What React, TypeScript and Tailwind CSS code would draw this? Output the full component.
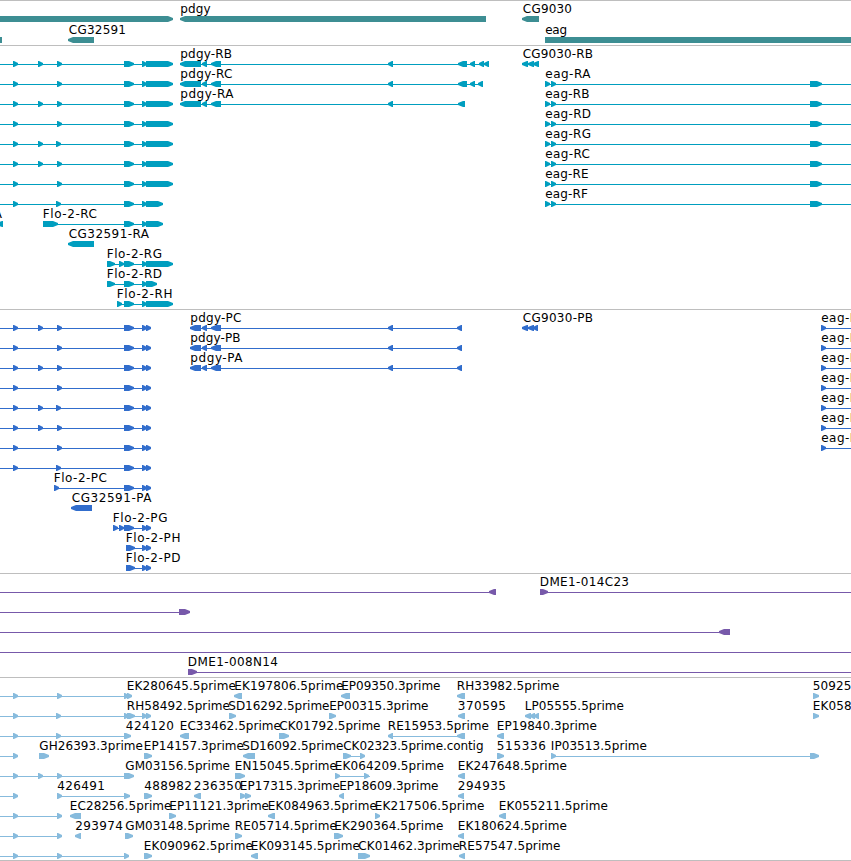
type Dir = '>' | '<';
type Feature = {
    // [x, width, text]
    labels?: [number, number, string][];
    // [x1, x2]
    lines?: [number, number][];
    // [direction, x1, x2]
    arrows?: [Dir, number, number][];
};

const merge = (...parts: Feature[]): Feature => ({
    labels: parts.flatMap((p) => p.labels ?? []),
    lines: parts.flatMap((p) => p.lines ?? []),
    arrows: parts.flatMap((p) => p.arrows ?? []),
});

const est = (x: number, width: number, text: string, dir: Dir, x1: number, x2: number): Feature => ({
    labels: [[x, width, text]],
    arrows: [[dir, x1, x2]],
});

// Flo-2 transcripts that start left of the visible region
const flo = (starts: number[], end: number): Feature => ({
    lines: [[0, end]],
    arrows: [
        ...starts.map((s): [Dir, number, number] => ['>', s, s + 5]),
        ['>', 124, 134],
        ['>', 142, 147],
        ['>', 146, end],
    ],
});

const floNamed = (x: number, width: number, text: string, exons: [number, number][], end: number): Feature => ({
    labels: [[x, width, text]],
    lines: [[exons[0][0], end]],
    arrows: [
        ...exons.map(([a, b]): [Dir, number, number] => ['>', a, b]),
        ['>', 142, 147],
        ['>', 146, end],
    ],
});

const pdgy = (x: number, width: number, text: string, start: number, exons: [number, number][]): Feature => ({
    labels: [[x, width, text]],
    lines: [[start, exons[exons.length - 1][1]]],
    arrows: [
        ['<', start, 201],
        ['<', 202, 207],
        ['<', 211, 221],
        ['<', 388, 393],
        ...exons.map(([a, b]): [Dir, number, number] => ['<', a, b]),
    ],
});

const cg9030 = (text: string, end: number): Feature => ({
    labels: [[522, 71, text]],
    lines: [[523, end]],
    arrows: [['<', 522, 528], ['<', 528, 534], ['<', 533, end]],
});

const eagR = (text: string, width: number): Feature => ({
    labels: [[544.5, width, text]],
    lines: [[545, 851]],
    arrows: [['>', 545, 550], ['>', 551, 556], ['>', 810, 822]],
});

// Only the first letters fit before the right edge of the region
const eagP: Feature = {
    labels: [[820.5, 36.5, 'eag-P']],
    lines: [[821, 851]],
    arrows: [['>', 821, 826]],
};

const genes: Feature[] = [
    {
        labels: [[179.5, 31, 'pdgy'], [522, 50, 'CG9030']],
        arrows: [['>', -10, 173], ['<', 180, 486], ['<', 522, 539]],
    },
    {
        labels: [[68, 58, 'CG32591'], [544.5, 22.5, 'eag']],
        arrows: [['<', -20, 2], ['<', 68, 94], ['>', 545, 870]],
    },
];

const transcripts: Feature[] = [
    merge(flo([13, 38, 57], 173), pdgy(179.5, 52.5, 'pdgy-RB', 180, [[458, 467], [470, 475], [479, 484], [484, 489]]), cg9030('CG9030-RB', 539)),
    merge(flo([13, 57], 173), pdgy(179.5, 53, 'pdgy-RC', 180, [[458, 467], [470, 475], [478, 483]]), eagR('eag-RA', 46)),
    merge(flo([13, 38, 57], 173), pdgy(179.5, 54, 'pdgy-RA', 180, [[458, 465]]), eagR('eag-RB', 45)),
    merge(flo([13, 57], 173), eagR('eag-RD', 46.5)),
    merge(flo([13, 38, 56], 173), eagR('eag-RG', 46.5)),
    merge(flo([13, 38, 57], 173), eagR('eag-RC', 45.5)),
    merge(flo([13, 57], 173), eagR('eag-RE', 44)),
    merge(flo([13, 56], 163), eagR('eag-RF', 43.5)),
    merge(
        { labels: [[-50, 52, 'Flo-2-RA']], arrows: [['<', -3, 3]] },
        floNamed(42, 55, 'Flo-2-RC', [[43, 58], [124, 134]], 163),
    ),
    est(68, 81, 'CG32591-RA', '<', 68, 94),
    floNamed(106, 56, 'Flo-2-RG', [[107, 115], [119, 124], [124, 134]], 173),
    floNamed(106, 56, 'Flo-2-RD', [[107, 115], [124, 134]], 157),
    floNamed(116, 56.5, 'Flo-2-RH', [[117, 122], [124, 134]], 173),
];

const proteins: Feature[] = [
    merge(flo([13, 38, 57], 151), pdgy(189.5, 52, 'pdgy-PC', 190, [[457, 462]]), cg9030('CG9030-PB', 538), eagP),
    merge(flo([13, 57], 151), pdgy(189.5, 51, 'pdgy-PB', 190, [[457, 462]]), eagP),
    merge(flo([13, 38, 57], 151), pdgy(189.5, 53, 'pdgy-PA', 190, [[457, 462]]), eagP),
    merge(flo([13, 57], 151), eagP),
    merge(flo([13, 38, 56], 151), eagP),
    merge(flo([13, 38, 57], 151), eagP),
    merge(flo([13, 57], 151), eagP),
    flo([13, 56], 151),
    floNamed(53, 54, 'Flo-2-PC', [[54, 59], [124, 134]], 151),
    est(71, 80.5, 'CG32591-PA', '<', 71, 92),
    floNamed(112, 55.5, 'Flo-2-PG', [[113, 118], [119, 124], [124, 134]], 151),
    floNamed(125, 55.5, 'Flo-2-PH', [[126, 135]], 151),
    floNamed(125, 55.5, 'Flo-2-PD', [[126, 135]], 151),
];

const clones: Feature[] = [
    { labels: [[539, 90, 'DME1-014C23']], lines: [[0, 496], [540, 851]], arrows: [['<', 489, 496], ['>', 540, 548]] },
    { lines: [[0, 190]], arrows: [['>', 179, 190]] },
    { lines: [[0, 730]], arrows: [['<', 719, 730]] },
    { lines: [[0, 851]] },
    { labels: [[187, 91, 'DME1-008N14']], lines: [[188, 851]], arrows: [['>', 188, 197]] },
];

const ests: Feature[] = [
    merge(
        { lines: [[0, 131]], arrows: [['>', 13, 18], ['>', 57, 62], ['>', 124, 129], ['>', 127, 132]] },
        { labels: [[126, 110, 'EK280645.5prime']] },
        est(233.5, 110, 'EK197806.5prime', '<', 234, 242),
        est(340.5, 100, 'EP09350.3prime', '<', 341, 350),
        est(456, 103.5, 'RH33982.5prime', '<', 457, 465),
        est(812, 94, '509251.5prime', '>', 813, 819),
    ),
    merge(
        { lines: [[0, 151]], arrows: [['>', 13, 18], ['>', 56, 61], ['>', 124, 129], ['>', 127, 135], ['>', 142, 147], ['>', 146, 151]] },
        { labels: [[126, 104, 'RH58492.5prime'], [524, 100, 'LP05555.5prime']] },
        est(227.5, 102, 'SD16292.5prime', '>', 229, 236),
        est(328.5, 100, 'EP00315.3prime', '>', 329, 336),
        est(457, 49, '370595', '<', 458, 465),
        { arrows: [['<', 525, 531], ['<', 530, 535], ['<', 534, 539]] },
        est(812, 110, 'EK058211.5prime', '>', 813, 819),
    ),
    merge(
        { lines: [[0, 131], [388, 465]], arrows: [['>', 13, 18], ['>', 56, 61], ['>', 124, 131], ['<', 388, 393], ['<', 457, 465]] },
        { labels: [[125, 49, '424120'], [387, 102, 'RE15953.5prime']] },
        est(179, 102, 'EC33462.5prime', '<', 180, 189),
        est(278.5, 102, 'CK01792.5prime', '>', 279, 289),
        est(496, 101, 'EP19840.3prime', '<', 497, 504),
    ),
    merge(
        { lines: [[0, 18], [343, 365], [551, 819]], arrows: [['>', 13, 18], ['>', 360, 365], ['>', 810, 819]] },
        est(38.5, 104.5, 'GH26393.3prime', '>', 39, 49),
        est(143, 101, 'EP14157.3prime', '>', 144, 152),
        est(241.5, 102, 'SD16092.5prime', '<', 243, 255),
        est(342.5, 141, 'CK02323.5prime.contig', '>', 343, 351),
        est(496, 50, '515336', '>', 497, 504),
        est(550, 97, 'IP03513.5prime', '>', 551, 556),
    ),
    merge(
        { lines: [[0, 134], [335, 370]], arrows: [['>', 13, 18], ['>', 38, 43], ['>', 57, 62], ['>', 364, 369]] },
        est(124.5, 105.5, 'GM03156.5prime', '>', 124, 134),
        est(234, 103, 'EN15045.5prime', '>', 235, 245),
        est(334, 110, 'EK064209.5prime', '>', 335, 340),
        est(457, 110, 'EK247648.5prime', '<', 458, 465),
    ),
    merge(
        { lines: [[0, 18], [57, 130]], arrows: [['>', 13, 18], ['>', 124, 130], ['>', 245, 251]] },
        est(56.5, 48.5, '426491', '>', 57, 62),
        est(143.5, 48.5, '488982', '>', 144, 152),
        est(193, 49, '236350', '<', 194, 201),
        est(239, 101, 'EP17315.3prime', '>', 240, 246),
        est(338.5, 100, 'EP18609.3prime', '<', 339, 344),
        est(457, 49, '294935', '<', 458, 464),
    ),
    merge(
        { lines: [[0, 62]], arrows: [['>', 13, 18], ['>', 57, 62]] },
        est(69, 102.5, 'EC28256.5prime', '<', 70, 81),
        est(168.5, 100.5, 'EP11121.3prime', '>', 169, 176),
        est(267, 110, 'EK084963.5prime', '<', 268, 275),
        est(374, 110.5, 'EK217506.5prime', '>', 375, 380),
        est(498, 110, 'EK055211.5prime', '<', 499, 506),
    ),
    merge(
        { lines: [[0, 62]], arrows: [['>', 13, 18], ['>', 57, 62]] },
        est(74.5, 48.5, '293974', '<', 75, 81),
        est(124.5, 105.5, 'GM03148.5prime', '>', 125, 133),
        est(234, 103, 'RE05714.5prime', '>', 235, 242),
        est(333.5, 110, 'EK290364.5prime', '>', 334, 343),
        est(457, 110, 'EK180624.5prime', '<', 458, 464),
    ),
    merge(
        { lines: [[0, 129]], arrows: [['>', 13, 18], ['>', 57, 62], ['>', 124, 129]] },
        est(143, 110, 'EK090962.5prime', '>', 144, 152),
        est(250, 110, 'EK093145.5prime', '<', 251, 258),
        est(357.5, 102.5, 'CK01462.3prime', '>', 358, 370),
        est(458, 102.5, 'RE57547.5prime', '<', 459, 465),
    ),
];

const tracks = [
    { id: 'genes', rows: genes, row: 'h-[21px]', height: 'h-[45px]', color: 'text-[#3d8e93]' },
    { id: 'transcripts', rows: transcripts, row: 'h-5', height: 'h-[264px]', color: 'text-[#009ebf]' },
    { id: 'proteins', rows: proteins, row: 'h-5', height: 'h-[264px]', color: 'text-[#316dcc]' },
    { id: 'clones', rows: clones, row: 'h-5', height: 'h-[104px]', color: 'text-[#7759aa]' },
    { id: 'ests', rows: ests, row: 'h-5', height: 'h-[183px]', color: 'text-[#87bbdd]' },
];

// Blunt heads, so that short exons stay readable
function arrowPoints(dir: Dir, x1: number, x2: number) {
    const head = Math.min(x2 - x1, 6) - 1;
    if (dir === '>') {
        return `${x1},13 ${x2 - head},13 ${x2},15 ${x2},17 ${x2 - head},19 ${x1},19`;
    }
    return `${x2},13 ${x1 + head},13 ${x1},15 ${x1},17 ${x1 + head},19 ${x2},19`;
}

function TrackRow({ feature, className }: { feature: Feature; className: string }) {
    return (
        <svg width="851" className={`block shrink-0 overflow-visible ${className}`}>
            {feature.lines?.map(([x1, x2], i) => (
                <rect key={i} x={x1} y={16} width={x2 - x1} height={1} fill="currentColor" />
            ))}
            {feature.arrows?.map(([dir, x1, x2], i) => (
                <polygon key={i} points={arrowPoints(dir, x1, x2)} fill="currentColor" />
            ))}
            {feature.labels?.map(([x, width, text]) => (
                <text key={text} x={x + 0.8} y={10} textLength={width - 0.8} className="fill-black">
                    {text}
                </text>
            ))}
        </svg>
    );
}

export default function App() {
    return (
        <main className="w-[851px] h-[861px] overflow-hidden bg-white border-b border-[#bebebe] font-['DejaVu_Sans',sans-serif] text-[12px]">
            {tracks.map((track) => (
                <section key={track.id} className={`flex flex-col border-t border-[#bebebe] pt-0.5 ${track.height} ${track.color}`}>
                    {track.rows.map((feature, i) => (
                        <TrackRow key={i} feature={feature} className={track.row} />
                    ))}
                </section>
            ))}
        </main>
    );
}
